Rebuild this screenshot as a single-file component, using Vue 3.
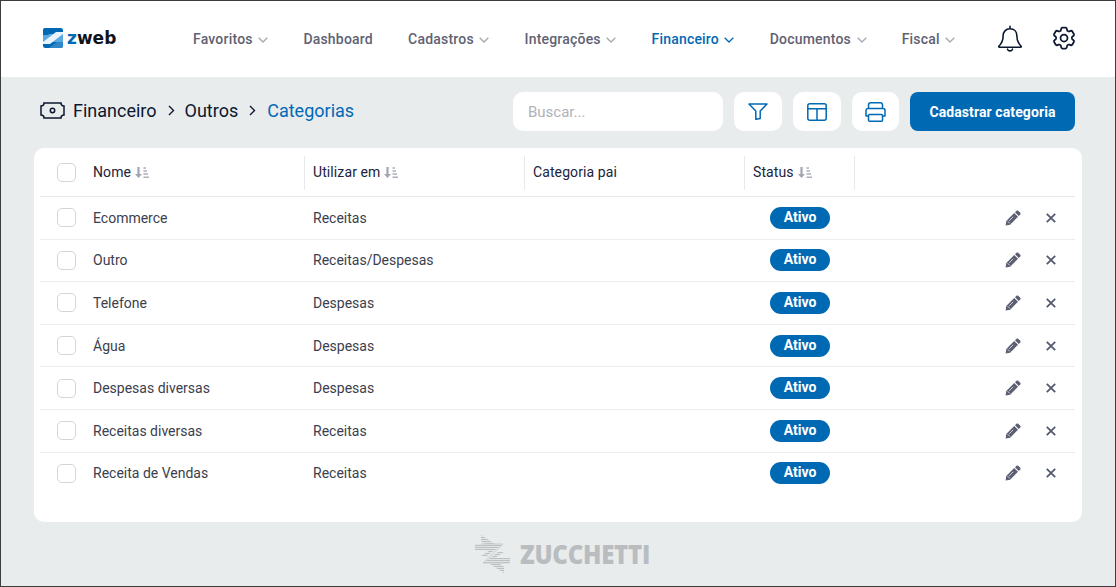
<script setup>
const nav = [
  { label: 'Favoritos', caret: true },
  { label: 'Dashboard' },
  { label: 'Cadastros', caret: true },
  { label: 'Integrações', caret: true },
  { label: 'Financeiro', caret: true, active: true },
  { label: 'Documentos', caret: true },
  { label: 'Fiscal', caret: true },
]
const rows = [
  ['Ecommerce', 'Receitas'],
  ['Outro', 'Receitas/Despesas'],
  ['Telefone', 'Despesas'],
  ['Água', 'Despesas'],
  ['Despesas diversas', 'Despesas'],
  ['Receitas diversas', 'Receitas'],
  ['Receita de Vendas', 'Receitas'],
]
</script>

<template>
  <div class="page">
    <header class="topbar">
      <div class="logo">
        <svg width="20" height="20" viewBox="0 0 20 20">
          <defs><clipPath id="lg"><rect width="20" height="20" rx="2.5" /></clipPath></defs>
          <g clip-path="url(#lg)">
            <rect width="20" height="20" fill="#0069b4" />
            <rect y="6" width="20" height="8" fill="#5aa8df" />
            <polygon points="13,4 20,4 20,6 7,16 0,16 0,14" fill="#e8f3fb" />
            <polygon points="0,0 14,0 5,7 0,7" fill="#0069b4" />
            <polygon points="14,14 20,14 20,20 6,20" fill="#2f86c8" />
          </g>
        </svg>
        <span class="logo-text"><b>z</b>web</span>
      </div>
      <nav class="nav">
        <a v-for="n in nav" :key="n.label" class="nav-item" :class="{ active: n.active }">
          {{ n.label }}
          <svg v-if="n.caret" width="10" height="6" viewBox="0 0 10 6" fill="none" stroke="currentColor" stroke-width="1.3"><path d="M.7.8 5 5 9.300.8" /></svg>
        </a>
      </nav>
      <div class="top-icons">
        <svg width="26" height="27" viewBox="0 0 26 27" fill="none" stroke="#0c1730" stroke-width="1.6" stroke-linejoin="round" stroke-linecap="round">
          <path d="M13 1.200v2.600M13 3.800c-4.300 0-6.900 3.200-6.900 7.200 0 4.600-1.300 7.300-4.200 10.200-.4.500-.1 1.100.5 1.100h21.200c.6 0 .9-.6.5-1.100-2.900-2.900-4.200-5.600-4.200-10.200 0-4-2.600-7.200-6.900-7.200Z" />
          <path d="M10.500 24.200c.5 1.200 1.400 1.700 2.500 1.700s2-.5 2.500-1.700" />
        </svg>
        <svg width="28" height="28" viewBox="0 0 24 24" fill="none" stroke="#0c1730" stroke-width="1.5" stroke-linejoin="round">
          <path d="M9.594 3.940c.09-.542.56-.94 1.110-.94h2.593c.55 0 1.020.398 1.110.94l.213 1.281c.063.374.313.686.645.870.074.04.147.083.22.127.325.196.72.257 1.075.124l1.217-.456a1.125 1.125 0 0 1 1.370.49l1.296 2.247a1.125 1.125 0 0 1-.26 1.431l-1.003.827c-.293.241-.438.613-.43.992a7.723 7.723 0 0 1 0 .255c-.008.378.137.75.43.991l1.004.827c.424.35.534.955.26 1.430l-1.298 2.247a1.125 1.125 0 0 1-1.369.491l-1.217-.456c-.355-.133-.75-.072-1.076.124a6.47 6.47 0 0 1-.22.128c-.331.183-.581.495-.644.869l-.213 1.281c-.09.543-.56.94-1.110.94h-2.594c-.55 0-1.019-.398-1.110-.94l-.213-1.281c-.062-.374-.312-.686-.644-.87a6.52 6.52 0 0 1-.22-.127c-.325-.196-.72-.257-1.076-.124l-1.217.456a1.125 1.125 0 0 1-1.369-.49l-1.297-2.247a1.125 1.125 0 0 1 .26-1.431l1.004-.827c.292-.24.437-.613.43-.991a6.932 6.932 0 0 1 0-.255c.007-.38-.138-.751-.43-.992l-1.004-.827a1.125 1.125 0 0 1-.26-1.430l1.297-2.247a1.125 1.125 0 0 1 1.370-.491l1.216.456c.356.133.751.072 1.076-.124.072-.044.146-.086.22-.128.332-.183.582-.495.644-.869l.214-1.280Z" />
          <circle cx="12" cy="12" r="3" />
        </svg>
      </div>
    </header>

    <main class="main">
      <div class="toolbar">
        <div class="crumbs">
          <svg width="25" height="17" viewBox="0 0 25 17" fill="none" stroke="#0c1730" stroke-width="1.5">
            <path d="M4 1h17a3 3 0 0 0 3 3v9a3 3 0 0 0-3 3H4a3 3 0 0 0-3-3V4a3 3 0 0 0 3-3Z" />
            <circle cx="12.500" cy="8.500" r="2.200" />
          </svg>
          <span>Financeiro</span>
          <svg class="sep tight" width="7" height="11" viewBox="0 0 7 11" fill="none" stroke="#0c1730" stroke-width="1.4"><path d="m1 1 4.500 4.500L1 10" /></svg>
          <span>Outros</span>
          <svg class="sep" width="7" height="11" viewBox="0 0 7 11" fill="none" stroke="#0c1730" stroke-width="1.4"><path d="m1 1 4.500 4.500L1 10" /></svg>
          <span class="current">Categorias</span>
        </div>
        <div class="tools">
          <input class="search" placeholder="Buscar..." />
          <button class="icon-btn wide">
            <svg width="20" height="17" viewBox="0 0 20 17" fill="none" stroke="#0069b4" stroke-width="1.500" stroke-linejoin="round"><path d="M1 1h18l-6.800 7v7.500l-4.400 .8V8L1 1Z" /></svg>
          </button>
          <button class="icon-btn">
            <svg width="20" height="18" viewBox="0 0 20 18" fill="none" stroke="#0069b4" stroke-width="1.500"><rect x=".8" y=".8" width="18.400" height="16.400" rx="2" /><path d="M.8 5.700h18.400M10 5.700v11.500" /></svg>
          </button>
          <button class="icon-btn">
            <svg width="21" height="20" viewBox="0 0 21 20" fill="none" stroke="#0069b4" stroke-width="1.500" stroke-linejoin="round"><path d="M3.500 6.500V3C3.500 1.700 4.500.8 5.800.8h9.400c1.300 0 2.300.9 2.300 2.200v3.500M3.500 14H1V8.500c0-1.100.9-2 2-2h15c1.100 0 2 .9 2 2V14h-2.500" /><rect x="3.500" y="12.500" width="14" height="6.700" rx="1" /></svg>
          </button>
          <button class="primary">Cadastrar categoria</button>
        </div>
      </div>

      <section class="card">
        <div class="grid head">
          <div class="cell first">
            <span class="check"></span>
            <span class="th">Nome</span>
            <svg class="sort" width="14" height="11" viewBox="0 0 14 11"><path d="M2.400 0h2.200v7H7L3.500 11 0 7h2.400Z" fill="#a2a5b1" /><path d="M8.500 1h2.500M8.500 4h3.500M8.500 7h4.500M8.500 10.200h5.500" stroke="#adafba" stroke-width="1.400" /></svg>
          </div>
          <div class="cell divided">
            <span class="th">Utilizar em</span>
            <svg class="sort" width="14" height="11" viewBox="0 0 14 11"><path d="M2.400 0h2.200v7H7L3.500 11 0 7h2.400Z" fill="#a2a5b1" /><path d="M8.500 1h2.500M8.500 4h3.500M8.500 7h4.500M8.500 10.200h5.500" stroke="#adafba" stroke-width="1.400" /></svg>
          </div>
          <div class="cell divided"><span class="th">Categoria pai</span></div>
          <div class="cell divided end">
            <span class="th">Status</span>
            <svg class="sort" width="14" height="11" viewBox="0 0 14 11"><path d="M2.400 0h2.200v7H7L3.500 11 0 7h2.400Z" fill="#a2a5b1" /><path d="M8.500 1h2.500M8.500 4h3.500M8.500 7h4.500M8.500 10.200h5.500" stroke="#adafba" stroke-width="1.400" /></svg>
          </div>
          <div class="cell"></div>
        </div>

        <div v-for="r in rows" :key="r[0]" class="grid row">
          <div class="cell first">
            <span class="check"></span>
            <span>{{ r[0] }}</span>
          </div>
          <div class="cell pad">{{ r[1] }}</div>
          <div class="cell"></div>
          <div class="cell center"><span class="badge">Ativo</span></div>
          <div class="cell actions">
            <svg width="16" height="16" viewBox="0 0 16 16"><path d="M11.300.9c.6-.6 1.500-.6 2.100 0l1.700 1.700c.6.600.6 1.500 0 2.100l-1.300 1.300-3.800-3.800L11.300.9ZM9.200 3l3.800 3.800-7.900 7.900L.6 15.400l.7-4.500L9.200 3Z" fill="#5c5f73" /><path d="m2.600 11.200 2.200 2.200M8.200 6.800l-4 4" stroke="#fff" stroke-width=".7" /></svg>
            <svg width="10" height="10" viewBox="0 0 10 10" fill="none" stroke="#555970" stroke-width="1.800"><path d="m.8.8 8.400 8.400M9.200.8.800 9.200" /></svg>
          </div>
        </div>
      </section>

      <footer class="brand">
        <svg width="36" height="38" viewBox="0 0 36 38">
          <defs>
            <pattern id="st" width="3" height="2" patternUnits="userSpaceOnUse"><rect width="3" height="1.200" fill="#bcc0c2" /></pattern>
          </defs>
          <polygon points="6,0 20,9 28,9 12,21 6,21 15,15 0,15 0,9 10,9 6,6" fill="url(#st)" />
          <polygon points="6,0 20,9 28,9 12,21 6,21 15,15 0,15 0,9 10,9 6,6" fill="url(#st)" transform="rotate(180 17.500 19)" />
          <path d="M6 9h22L8 28h21" fill="none" stroke="#c9cdcf" stroke-width="1" />
        </svg>
        <span class="brand-name">ZUCCHETTI</span>
      </footer>
    </main>
  </div>
</template>

<style>
html, body { margin: 0; padding: 0; }
</style>

<style scoped>
.page {
  box-sizing: border-box;
  width: 1116px;
  height: 587px;
  border: 1px solid #3d3d3d;
  display: flex;
  flex-direction: column;
  background: #e9eced;
  font-family: Roboto, "Liberation Sans", sans-serif;
  color: #0c1730;
  overflow: hidden;
}
.topbar {
  height: 76px;
  flex: none;
  background: #fff;
  display: flex;
  align-items: center;
  padding: 0 37px 0 42px;
}
.logo { display: flex; align-items: center; gap: 4px; width: 150px; margin-top: -2px; }
.logo-text {
  font-family: "DejaVu Sans", sans-serif;
  font-weight: 700;
  font-size: 17px;
  color: #10131c;
}
.logo-text b { color: #0069b4; font-weight: 700; }
.nav { display: flex; gap: 35.200px; flex: 1; font-size: 14px; font-weight: 500; letter-spacing: .2px; color: #5f6273; }
.nav-item { display: flex; align-items: center; gap: 5.500px; white-space: nowrap; }
.nav-item svg { color: #a5a7b3; margin-top: 1px; }
.nav-item.active, .nav-item.active svg { color: #0069b4; }
.top-icons { display: flex; align-items: center; gap: 27px; margin-top: -2px; }
.main { flex: 1; display: flex; flex-direction: column; padding: 0 33px; min-height: 0; }
.toolbar {
  box-sizing: border-box;
  height: 71px;
  flex: none;
  display: flex;
  align-items: center;
  justify-content: space-between;
  padding: 0 7px 2px 6px;
}
.crumbs { display: flex; align-items: center; font-size: 18px; color: #0c1730; margin-top: -2px; }
.crumbs > svg:first-child { margin-right: 8px; }
.sep { margin: 0 11px; }
.sep.tight { margin: 0 10px 0 11px; }
.current { color: #0069b4; }
.tools { display: flex; align-items: center; gap: 11px; }
.search {
  box-sizing: border-box;
  width: 210px;
  height: 39px;
  border: 0;
  border-radius: 10px;
  background: #fff;
  padding: 0 15px;
  font: 400 15px Roboto, sans-serif;
  outline: none;
}
.search::placeholder { color: #b0b2b9; opacity: 1; }
.icon-btn {
  width: 47.500px;
  height: 39px;
  flex: none;
  border: 0;
  border-radius: 10px;
  background: #fff;
  padding: 0;
  display: flex;
  align-items: center;
  justify-content: center;
}
.icon-btn.wide { width: 48px; }
.primary {
  width: 165px;
  height: 39px;
  flex: none;
  border: 0;
  border-radius: 8px;
  background: #0069b4;
  color: #fff;
  font: 700 14px Roboto, sans-serif;
  letter-spacing: .1px;
  padding: 0;
}
.card {
  box-sizing: border-box;
  height: 374px;
  flex: none;
  background: #fff;
  border-radius: 10px;
  padding: 0 7px 0 6px;
  font-size: 14px;
  color: #3b3e4e;
}
.grid { display: grid; grid-template-columns: 264px 220px 220px 111px 1fr; }
.head { height: 49px; border-bottom: 1px solid #e6e8ea; box-sizing: border-box; padding: 8px 0 6px; }
.row { height: 42.600px; border-bottom: 1px solid #ecedef; box-sizing: border-box; align-items: center; }
.row:last-child { border-bottom-color: transparent; }
.cell { display: flex; align-items: center; min-width: 0; }
.first { padding-left: 17px; }
.divided { border-left: 1px solid #e8e9ec; padding-left: 8px; }
.end { border-right: 1px solid #e8e9ec; }
.pad { padding-left: 9px; }
.center { justify-content: center; }
.check {
  box-sizing: border-box;
  width: 19px;
  height: 19px;
  border: 1px solid #d2d5dc;
  border-radius: 5px;
  margin-right: 17px;
  flex: none;
}
.head .check { margin-top: -1px; }
.th { color: #20233a; letter-spacing: .1px; margin-top: -2px; }
.sort { margin-left: 4px; margin-top: -1px; }
.badge {
  box-sizing: border-box;
  width: 60px;
  height: 22px;
  padding-left: 1px;
  border-radius: 11px;
  background: #0069b4;
  color: #fff;
  font-weight: 700;
  font-size: 14px;
  line-height: 21px;
  text-align: center;
}
.actions { justify-content: flex-end; gap: 25px; padding-right: 19px; }
.brand {
  flex: 1;
  display: flex;
  align-items: center;
  justify-content: center;
  gap: 9px;
  padding-left: 10px;
}
.brand-name {
  display: inline-block;
  width: 131px;
  white-space: nowrap;
  font-family: "Open Sans", sans-serif;
  font-weight: 800;
  font-size: 27px;
  line-height: 30px;
  letter-spacing: -.3px;
  color: #b9bdbf;
  transform: scaleX(.89);
  transform-origin: left center;
}
</style>
